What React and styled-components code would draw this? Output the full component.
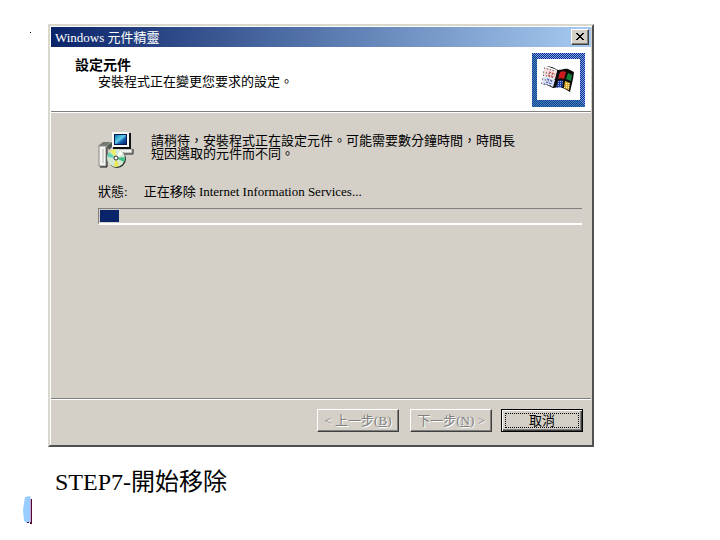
import React from "react";
import styled, { createGlobalStyle } from "styled-components";

const GlobalStyle = createGlobalStyle`
  * { box-sizing: border-box; }
  body {
    margin: 0;
    background: #fff;
    color: #000;
    font-family: "Liberation Serif", "Noto Sans CJK TC", serif;
    font-size: 13px;
    line-height: 13px;
  }
  h1, h2, p { margin: 0; font-size: inherit; font-weight: normal; }
`;

const Slide = styled.main`
  position: relative;
  min-height: 100vh;
  padding: 24px 126px 12px 48px;
`;

const Dot = styled.span`
  position: absolute;
  left: 30px;
  top: 32px;
  width: 1px;
  height: 1px;
  background: #000;
`;

const Dialog = styled.section`
  display: flex;
  flex-direction: column;
  min-height: 423px;
  padding: 1px;
  background: #d4d0c8;
  border: 2px solid;
  border-color: #d8d8cc #505050 #505050 #d8d8cc;
  box-shadow: inset 1px 1px #fff;
`;

const TitleBar = styled.header`
  display: flex;
  align-items: center;
  justify-content: space-between;
  height: 20px;
  padding: 0 2px 0 4px;
  color: #fff;
  background: linear-gradient(90deg, #0a246a, #a6caf0);
`;

const CloseButton = styled.button`
  display: grid;
  place-items: center;
  width: 18px;
  height: 16px;
  padding: 0;
  background: #d4d0c8;
  border: 1px solid;
  border-color: #fff #404040 #404040 #fff;
  box-shadow: inset -1px -1px #808080;
`;

const Banner = styled.div`
  display: flex;
  justify-content: space-between;
  align-items: flex-start;
  height: 64px;
  padding: 6px 6px 0 24px;
  background: #fff;
`;

const BannerText = styled.div`
  display: grid;
  gap: 2px;
  padding-top: 6px;

  h2 {
    font-size: 14px;
    font-weight: bold;
    line-height: 14px;
  }
  p { padding-left: 23px; }
`;

const Rule = styled.hr`
  width: 100%;
  height: 2px;
  margin: 0;
  border: 0;
  border-top: 1px solid #808080;
  border-bottom: 1px solid #fff;
`;

const Content = styled.div`
  flex: 1;
  padding: 19px 9px 0 47px;
`;

const Message = styled.div`
  display: grid;
  grid-template-columns: 36px minmax(0, 368px);
  gap: 17px;

  p { padding-top: 2px; }
`;

const Status = styled.div`
  display: flex;
  gap: 16px;
  margin: 16px 0 10px;
`;

const Progress = styled.div`
  height: 17px;
  padding: 1px 1px;
  border-top: 1px solid #808080;
  border-left: 1px solid #808080;
  border-bottom: 2px solid #fff;
`;

const ProgressBlock = styled.div`
  width: ${({ $value }) => $value}%;
  height: 12px;
  background: #0a246a;
`;

const Footer = styled.footer`
  display: flex;
  justify-content: flex-end;
  padding: 9px 8px 12px 0;
`;

const Button = styled.button`
  width: 82px;
  height: 23px;
  margin-left: ${({ $gap }) => $gap || 0}px;
  padding: ${({ $primary }) => ($primary ? "2px" : "0")};
  color: #000;
  font: inherit;
  background: #d4d0c8;
  border: 1px solid;
  border-color: ${({ $primary }) => ($primary ? "#000" : "#fff #404040 #404040 #fff")};
  box-shadow: ${({ $primary }) =>
    $primary
      ? "inset 1px 1px #fff, inset -1px -1px #404040, inset -2px -2px #808080"
      : "inset -1px -1px #808080"};

  &:disabled {
    color: #808080;
    text-shadow: 1px 1px #fff;
  }

  span {
    display: block;
    margin: ${({ $primary }) => ($primary ? "1px" : "0")};
    line-height: ${({ $primary }) => ($primary ? "13px" : "19px")};
    border: ${({ $primary }) => ($primary ? "1px dotted #000" : "0")};
  }
`;

const Caption = styled.h1`
  && {
    margin: 21px 0 0 7px;
    font-size: 24px;
    line-height: 28px;
  }
`;

const Marker = styled.svg`
  position: absolute;
  left: 22px;
  top: 496px;
`;

function WindowsLogo() {
  return (
    <svg width="53" height="54" viewBox="0 0 53 54" aria-hidden="true">
      <defs>
        <pattern id="weave" width="2" height="2" patternUnits="userSpaceOnUse">
          <rect width="2" height="2" fill="#7fa8dc" />
          <path d="M0 0h1v1H0zM1 1h1v1H1z" fill="#0b2a98" />
        </pattern>
        <pattern id="tealWeave" width="2" height="2" patternUnits="userSpaceOnUse">
          <rect width="2" height="2" fill="#3f86b0" />
          <path d="M0 0h1v1H0zM1 1h1v1H1z" fill="#153f9c" />
        </pattern>
        <pattern id="blueDots" width="2" height="2" patternUnits="userSpaceOnUse">
          <rect width="2" height="2" fill="#1c3ca5" />
          <path d="M0 0h1v1H0z" fill="#9bafe8" />
        </pattern>
        <pattern id="goldDots" width="2" height="2" patternUnits="userSpaceOnUse">
          <rect width="2" height="2" fill="#e0ac30" />
          <path d="M0 0h1v1H0z" fill="#fff0a8" />
        </pattern>
      </defs>
      <path fill="url(#weave)" d="M0 0h53v54H0z" />
      <path fill="url(#tealWeave)" d="M0 0l5 6v41h43l5 7H0z" />
      <path fill="#fff" d="M5 6h43v41H5z" />
      <path d="M14 13l6 1 6 3c4 0 6-2 10-1l6 3-1 7-3 13-5-3-5-2-7 1-6-3-5-1 1-1 6 1 4 1 4-15-5-2-6-2z" fill="#0b0b0b" />
      <path d="M13 14l6 2 6 2-2 8-5-1-7-2z" fill="#f6dcdc" />
      <path d="M11 24l6 1 6 2-2 7-5-2-6-1z" fill="#d8e0f6" />
      <path d="M28 19c2-1 4-1 6 0l-2 7c-2-1-4-1-6 0z" fill="#cc1c20" />
      <path d="M36 20l4 2-1 6-5-2z" fill="#118039" />
      <path d="M26 28c2-1 3-1 5 0l-1 7c-2-1-4-1-6 0z" fill="url(#blueDots)" />
      <path d="M33 28l5 2-1 7-5-2z" fill="url(#goldDots)" />
      <path d="M12 15l11 3M11 19l12 3M11 22l11 3M10 26l11 3M9 30l11 3" stroke="#333" strokeDasharray="1 2" />
      <path d="M17 19l6 2M16 22l6 2" stroke="#c33" strokeDasharray="2 1" />
      <path d="M15 26l6 2M14 29l6 2" stroke="#3048b8" strokeDasharray="2 1" />
    </svg>
  );
}

function SetupIcon() {
  return (
    <svg width="36" height="37" viewBox="0 0 36 37" aria-hidden="true">
      <defs>
        <linearGradient id="screen" x1="0" y1="0" x2="1" y2="1">
          <stop offset="0" stopColor="#0878b0" />
          <stop offset=".45" stopColor="#62cde7" />
          <stop offset=".65" stopColor="#155fae" />
          <stop offset="1" stopColor="#092070" />
        </linearGradient>
      </defs>
      <path d="M16 17h18v4H16z" fill="#f2f2ee" stroke="#999" />
      <path d="M35 17v5H20" fill="none" stroke="#222" />
      <path d="M32 1v15H15" fill="none" stroke="#111" strokeWidth="2" />
      <path d="M14 0h17v15H14z" fill="#f8f8f6" />
      <path d="M16 2h13v11H16z" fill="#061750" />
      <path d="M17 3h11v9H17z" fill="url(#screen)" />
      <path d="M0 14l5-4h8l-4 4z" fill="#73796e" />
      <path d="M9 14l5-4v5l-3 3z" fill="#4d5850" />
      <path d="M1 14h7v20H1z" fill="#f4f4f2" stroke="#888" />
      <path d="M2 35h7V15" fill="none" stroke="#111" />
      <path d="M4 17h2v14H4z" fill="#d5d5d2" />
      <circle cx="19" cy="27" r="9" fill="#26362f" />
      <circle cx="18" cy="26" r="9" fill="#d5e8d2" />
      <path d="M18 26l-6-7 5-2z" fill="#eef062" />
      <path d="M18 26l-9-1 2-5z" fill="#64d2b6" />
      <path d="M18 26l9-1-1 5z" fill="#3fc087" />
      <path d="M18 26l3 8-5 1z" fill="#eae94c" />
      <path d="M18 26l4-8 3 4z" fill="#f8fcf8" />
      <circle cx="18" cy="26" r="2" fill="#fff" stroke="#333" />
    </svg>
  );
}

export default function App() {
  return (
    <>
      <GlobalStyle />
      <Slide>
        <Dot />
        <Dialog aria-labelledby="dialog-title">
          <TitleBar>
            <span id="dialog-title">Windows 元件精靈</span>
            <CloseButton type="button" aria-label="關閉">
              <svg width="10" height="8" viewBox="0 0 10 8" aria-hidden="true">
                <path d="M1 0l7 7M8 0L1 7M2 0l7 7M9 0L2 7" stroke="#000" shapeRendering="crispEdges" />
              </svg>
            </CloseButton>
          </TitleBar>
          <Banner>
            <BannerText>
              <h2>設定元件</h2>
              <p>安裝程式正在變更您要求的設定。</p>
            </BannerText>
            <WindowsLogo />
          </Banner>
          <Rule />
          <Content>
            <Message>
              <SetupIcon />
              <p>請稍待，安裝程式正在設定元件。可能需要數分鐘時間，時間長短因選取的元件而不同。</p>
            </Message>
            <Status>
              <span>狀態:</span>
              <span>正在移除 Internet Information Services...</span>
            </Status>
            <Progress role="progressbar" aria-label="狀態" aria-valuenow={4}>
              <ProgressBlock $value={4} />
            </Progress>
          </Content>
          <Rule />
          <Footer>
            <Button type="button" disabled><span>&lt; 上一步(<u>B</u>)</span></Button>
            <Button type="button" disabled $gap={11}><span>下一步(<u>N</u>) &gt;</span></Button>
            <Button type="button" $primary $gap={9}><span>取消</span></Button>
          </Footer>
        </Dialog>
        <Caption>STEP7-開始移除</Caption>
        <Marker width="12" height="30" viewBox="0 0 12 30" aria-hidden="true">
          <path d="M3 1l5-1 1 4v22l-4 1-3-2-1-11z" fill="#99ccff" />
          <path d="M8 3h1v24H8z" fill="#c9a0d8" />
          <path d="M9 3h1v25H8v-2h1zM5 26h2v1H5z" fill="#500c30" />
        </Marker>
      </Slide>
    </>
  );
}
